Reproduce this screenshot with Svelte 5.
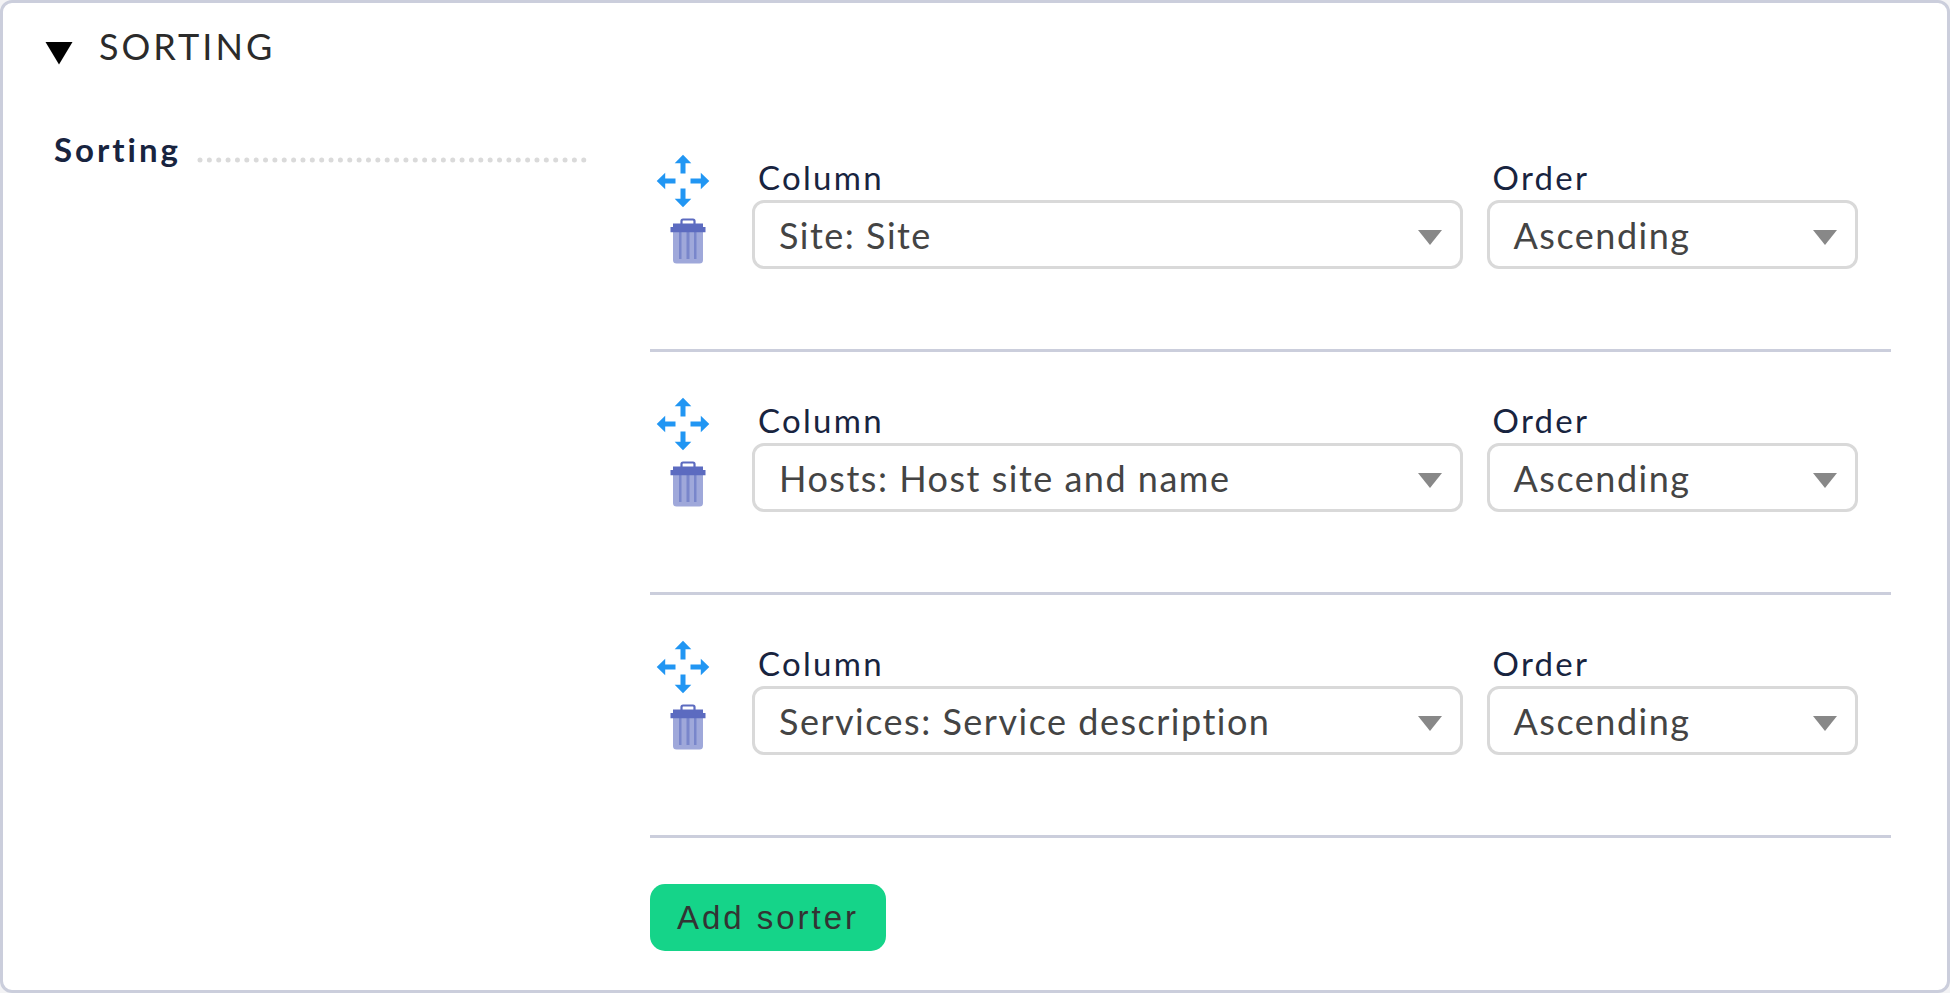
<script>
  const sorters = [
    { column: 'Site: Site', order: 'Ascending' },
    { column: 'Hosts: Host site and name', order: 'Ascending' },
    { column: 'Services: Service description', order: 'Ascending' }
  ];
</script>

<section class="panel">
  <header>
    <svg class="fold" width="28" height="24" viewBox="0 0 28 24"><path d="M.5 1H27.500L14 23.500Z" fill="#000" /></svg>
    <h1>SORTING</h1>
  </header>
  <div class="body">
    <div class="legend">
      <span>Sorting</span>
      <svg class="dots" width="390" height="6" viewBox="0 0 390 6">
        <line x1="3" y1="3" x2="387.500" y2="3" stroke="#dadada" stroke-width="5" stroke-linecap="round" stroke-dasharray="0 9.360" />
      </svg>
    </div>
    <div class="content">
      {#each sorters as sorter}
        <div class="row">
          <div class="tools">
            <svg class="move" width="54" height="54" viewBox="0 0 54 54" fill="#2196f3">
              {#each [0, 90, 180, 270] as angle}
                <path transform="rotate({angle} 27 27)" d="M27 .7L35.300 9.200H29.500V19.500H24.500V9.200H18.700Z" />
              {/each}
            </svg>
            <svg class="trash" width="36" height="46" viewBox="0 0 36 46">
              <path d="M3 13H33V42Q33 45.500 29.500 45.500H6.500Q3 45.500 3 42Z" fill="#9fa8da" />
              <path d="M9 13H11.500V41H9ZM16.500 13H19.500V41H16.500ZM24 13H26.500V41H24Z" fill="#7986cb" />
              <path d="M11.500 6V3Q11.500 1.500 13 1.500H23Q24.500 1.500 24.500 3V6" fill="none" stroke="#5c6bc0" stroke-width="2.200" />
              <path d="M3 5.500H33V9H35.500V14.300H.5V9H3Z" fill="#5c6bc0" />
            </svg>
          </div>
          <div class="field column">
            <span class="label">Column</span>
            <div class="select">
              <span>{sorter.column}</span>
              <svg width="24" height="15" viewBox="0 0 24 15"><path d="M0 0H24L12 15Z" fill="#888" /></svg>
            </div>
          </div>
          <div class="field order">
            <span class="label">Order</span>
            <div class="select">
              <span>{sorter.order}</span>
              <svg width="24" height="15" viewBox="0 0 24 15"><path d="M0 0H24L12 15Z" fill="#888" /></svg>
            </div>
          </div>
        </div>
      {/each}
      <button type="button">Add sorter</button>
    </div>
  </div>
</section>

<style>
  :global(body) {
    margin: 0;
    background: #f3f3f5;
  }
  .panel {
    box-sizing: border-box;
    width: 1950px;
    height: 993px;
    border: 3px solid #cbcedc;
    border-radius: 12px;
    background: #fff;
    font-family: Lato, sans-serif;
    color: #18243f;
  }
  header {
    display: flex;
    align-items: flex-start;
    height: 103px;
    padding-left: 42px;
  }
  .fold {
    margin-top: 38px;
  }
  h1 {
    margin: 21px 0 0 26px;
    font-size: 36px;
    line-height: 44px;
    font-weight: 400;
    letter-spacing: 3px;
    color: #2b2b2b;
  }
  .body {
    display: flex;
  }
  .legend {
    display: flex;
    align-items: flex-start;
    box-sizing: border-box;
    width: 597px;
    padding: 23px 0 0 51px;
    font-size: 33px;
    line-height: 40px;
    font-weight: 700;
    letter-spacing: 3px;
  }
  .dots {
    margin: 28px 0 0 15.500px;
    flex: none;
  }
  .content {
    width: 1241px;
    padding-left: 50px;
  }
  .row {
    display: flex;
    box-sizing: border-box;
    height: 243px;
    border-bottom: 3px solid #cbcedc;
    padding-left: 6px;
    padding-top: 45px;
  }
  .row:first-child {
    height: 246px;
    padding-top: 48px;
  }
  .tools {
    width: 96px;
    display: flex;
    flex-direction: column;
  }
  .move {
    flex: none;
  }
  .trash {
    margin: 10px 0 0 14px;
    flex: none;
  }
  .field {
    display: flex;
    flex-direction: column;
  }
  .column {
    width: 711px;
    margin-right: 23.500px;
  }
  .order {
    width: 371.500px;
  }
  .label {
    box-sizing: border-box;
    height: 46px;
    padding: 3px 0 0 6px;
    font-size: 33px;
    line-height: 40px;
    letter-spacing: 2.300px;
  }
  .select {
    box-sizing: border-box;
    height: 69px;
    border: 3px solid #d9d9d9;
    border-radius: 12px;
    display: flex;
    align-items: center;
    justify-content: space-between;
    padding: 0 18px 0 24px;
    font-size: 36px;
    letter-spacing: 1.500px;
    color: #444;
  }
  .select svg {
    margin-top: 6px;
  }
  button {
    display: block;
    margin: 46px 0 0;
    width: 236px;
    height: 67px;
    padding: 0;
    border: 0;
    border-radius: 15px;
    background: #15d489;
    color: #333;
    font: 33px "Liberation Sans", Arial, sans-serif;
    letter-spacing: 3px;
  }
</style>
